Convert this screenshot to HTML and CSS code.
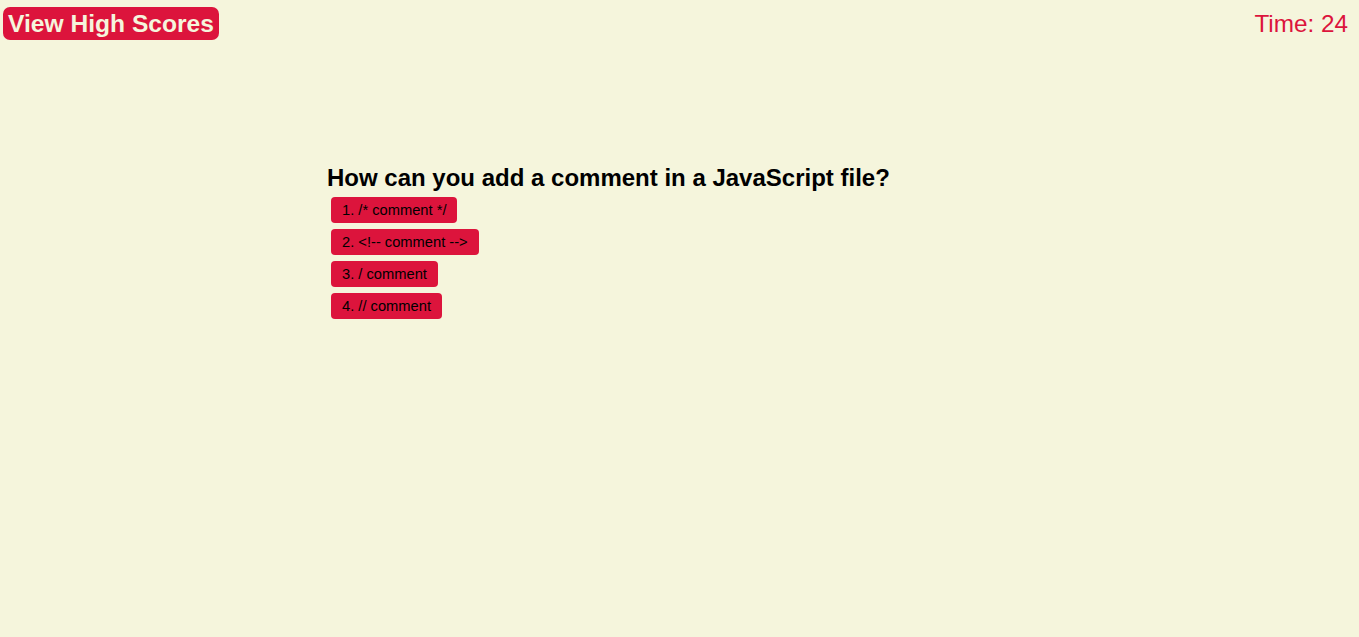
FILE: index.html
```html
<!DOCTYPE html>
<html>
<head>
<meta charset="utf-8">
<link rel="stylesheet" href="styles.css">
</head>
<body>
<header class="top">
  <button class="scores">View High Scores</button>
  <div class="timer">Time: 24</div>
</header>
<main class="quiz">
  <h2 class="question">How can you add a comment in a JavaScript file?</h2>
  <div class="answers">
    <button class="answer">1. /* comment */</button>
    <button class="answer">2. &lt;!-- comment --&gt;</button>
    <button class="answer">3. / comment</button>
    <button class="answer">4. // comment</button>
  </div>
</main>
</body>
</html>
```
FILE: styles.css
```css
html, body {
  margin: 0;
  background: #f5f5dc;
  font-family: "Liberation Sans", Arial, sans-serif;
  min-height: 100%;
}
body {
  height: 637px;
}
.top {
  display: flex;
  justify-content: space-between;
  align-items: flex-start;
  padding: 7px 11px 0 3px;
}
.scores {
  background: #dc143c;
  color: #f5f5dc;
  border: none;
  border-radius: 7px;
  font-family: "Liberation Sans", Arial, sans-serif;
  font-weight: bold;
  font-size: 24.6px;
  height: 33px;
  padding: 0 5px;
  line-height: 33px;
}
.timer {
  color: #dc143c;
  font-size: 24.3px;
  line-height: 33px;
}
.quiz {
  padding-left: 327px;
  padding-top: 124px;
}
.question {
  margin: 0;
  font-size: 24px;
  line-height: 28px;
  font-weight: bold;
  color: #000;
}
.answers {
  display: flex;
  flex-direction: column;
  align-items: flex-start;
  gap: 6px;
  padding-left: 4px;
  margin-top: 5px;
}
.answer {
  background: #dc143c;
  color: #000;
  border: none;
  border-radius: 4px;
  font-family: "Liberation Sans", Arial, sans-serif;
  font-size: 14.7px;
  height: 26px;
  padding: 0 11px;
}
```
